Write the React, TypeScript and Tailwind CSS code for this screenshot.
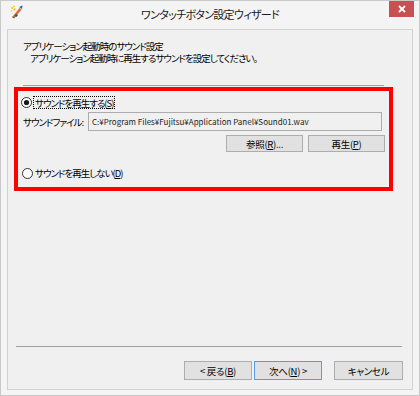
import React from "react";

const JP = "font-['Noto_Sans_CJK_JP',sans-serif] [font-feature-settings:'palt']";

function Radio({ checked }: { checked: boolean }) {
  return (
    <svg width="11" height="11" viewBox="0 0 11 11" className="shrink-0">
      <circle cx="5.5" cy="5.5" r="5" fill="#ffffff" stroke="#333333" strokeWidth="1" />
      {checked && <circle cx="5.5" cy="5.5" r="2.6" fill="#1a1a1a" />}
    </svg>
  );
}

function Btn({ children, w, primary }: { children: React.ReactNode; w: string; primary?: boolean }) {
  return (
    <div
      className={`${w} h-full flex items-center justify-center bg-[#e1e1e1] border ${
        primary ? "border-[#569de5]" : "border-[#adadad]"
      } text-[9.5px] leading-[12px] tracking-[-0.3px] text-black whitespace-pre`}
    >
      {children}
    </div>
  );
}

function AppIcon() {
  return (
    <svg width="14" height="14" viewBox="0 0 14 14">
      <circle cx="2" cy="3" r="1" fill="#f5c400" />
      <circle cx="4" cy="1.5" r="0.9" fill="#f5d100" />
      <circle cx="4.5" cy="4.5" r="1.1" fill="#f0b800" />
      <circle cx="1.5" cy="6" r="0.8" fill="#f5c400" />
      <path d="M9 2 L12.5 0.5 L12 4 Z" fill="#2a5bd7" />
      <path d="M3 11 L9.5 3 L11.5 4.5 L5 12.5 Z" fill="#e06a2c" />
      <path d="M3 11 L5 12.5 L4 13.5 L2 12 Z" fill="#555" />
      <path d="M6 9 L8 10 L6.5 12 L4.5 11 Z" fill="#3b4a7a" />
    </svg>
  );
}

export default function App() {
  return (
    <div
      className={`w-[420px] h-[396px] bg-[#f4f4f4] border border-[#c9c9c9] flex flex-col text-black ${JP}`}
    >
      {/* Title bar */}
      <div className="h-[28px] shrink-0 grid grid-cols-[1fr_auto_1fr]">
        <div className="pl-[9px] pt-[4px]">
          <AppIcon />
        </div>
        <div className="pt-[6px] text-[11px] leading-[14px] tracking-[-0.7px] text-[#1a1a1a] whitespace-nowrap">
          ワンタッチボタン設定ウィザード
        </div>
        <div className="flex justify-end pr-[5px]">
          <div className="w-[25px] h-[16px] bg-[#c75050] flex items-center justify-center">
            <svg width="8" height="8" viewBox="0 0 8 8">
              <path d="M1 1 L7 7 M7 1 L1 7" stroke="#ffffff" strokeWidth="1.8" />
            </svg>
          </div>
        </div>
      </div>

      {/* Content panel */}
      <div className="mx-[6px] mb-[5px] flex-1 bg-[#f0f0f0] border border-[#d2d2d2] flex flex-col">
        <div className="pt-[10px] pl-[15px] text-[9.5px] leading-[12px] tracking-[-1px] whitespace-nowrap">
          <div>アプリケーション起動時のサウンド設定</div>
          <div className="pl-[7px]">アプリケーション起動時に再生するサウンドを設定してください。</div>
        </div>
        <div className="mt-[21px] ml-[15px] w-[361px] h-px bg-[#a0a0a0]" />

        {/* highlighted group */}
        <div className="mt-[1px] ml-[6px] w-[379px] h-[104px] border-4 border-[#ff0000] flex flex-col text-[9.5px] leading-[12px] tracking-[-1px] whitespace-nowrap">
          <div className="mt-[5px] h-[13px] pl-[3px] flex items-center">
            <Radio checked />
            <div className="ml-[1px] h-[13px] px-[1px] border border-dotted border-black flex items-center">
              サウンドを再生する(<span className="underline">S</span>)
            </div>
          </div>
          <div className="mt-[3px] h-[19px] pl-[5px] flex items-center">
            <div className="w-[65px]">サウンドファイル:</div>
            <div className="w-[294px] h-full bg-[#f0f0f0] border border-[#acacac] flex items-center pl-[3px] text-[8px] tracking-[0px] text-[#222]">
              C:¥Program Files¥Fujitsu¥Application Panel¥Sound01.wav
            </div>
          </div>
          <div className="mt-[4px] h-[17px] pr-[4px] flex justify-end gap-[5px]">
            <Btn w="w-[77px]">
              参照(<span className="underline">R</span>)...
            </Btn>
            <Btn w="w-[77px]">
              再生(<span className="underline">P</span>)
            </Btn>
          </div>
          <div className="mt-[15px] h-[12px] pl-[4px] flex items-center">
            <Radio checked={false} />
            <div className="ml-[2px]">
              サウンドを再生しない(<span className="underline">D</span>)
            </div>
          </div>
        </div>

        {/* Footer */}
        <div className="mt-auto pb-[9px]">
          <div className="ml-[8px] w-[386px] h-px bg-[#a0a0a0]" />
          <div className="mt-[14px] h-[19px] pr-[9px] flex justify-end">
            <Btn w="w-[68px]">
              {"< 戻る("}<span className="underline">B</span>)
            </Btn>
            <div className="w-[2px]" />
            <Btn w="w-[68px]" primary>
              次へ(<span className="underline">N</span>
              {") >"}
            </Btn>
            <div className="w-[12px]" />
            <Btn w="w-[69px]">キャンセル</Btn>
          </div>
        </div>
      </div>
    </div>
  );
}
